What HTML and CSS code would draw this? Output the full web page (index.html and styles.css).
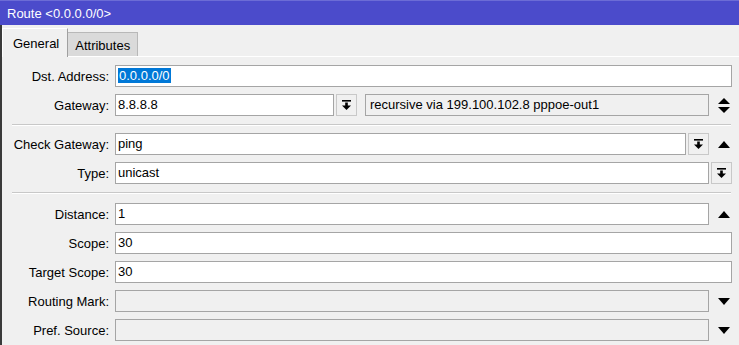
FILE: index.html
```html
<!DOCTYPE html>
<html>
<head>
<meta charset="utf-8">
<link rel="stylesheet" href="styles.css">
</head>
<body>
<div class="titlebar">Route &lt;0.0.0.0/0&gt;</div>
<div class="window">
  <div class="tabs">
    <div class="tab active">General</div>
    <div class="tab">Attributes</div>
  </div>
  <div class="form">
    <div class="group">
      <div class="row">
        <label class="lbl">Dst. Address:</label>
        <div class="field full"><span class="sel">0.0.0.0/0</span></div>
      </div>
      <div class="row">
        <label class="lbl">Gateway:</label>
        <div class="field gw">8.8.8.8</div>
        <div class="btn"><svg width="9" height="10" viewBox="0 0 9 10"><rect x="0" y="0" width="9" height="1.6" fill="#000"/><rect x="3.2" y="2.5" width="2.6" height="3.5" fill="#000"/><polygon points="0,5.5 9,5.5 4.5,10" fill="#000"/></svg></div>
        <div class="field ro rv">recursive via 199.100.102.8 pppoe-out1</div>
        <div class="icon"><svg width="12" height="15" viewBox="0 0 12 15"><polygon points="6,0 12,6 0,6" fill="#000"/><polygon points="0,9 12,9 6,15" fill="#000"/></svg></div>
      </div>
    </div>
    <div class="sep"></div>
    <div class="group">
      <div class="row">
        <label class="lbl">Check Gateway:</label>
        <div class="field grow">ping</div>
        <div class="btn"><svg width="9" height="10" viewBox="0 0 9 10"><rect x="0" y="0" width="9" height="1.6" fill="#000"/><rect x="3.2" y="2.5" width="2.6" height="3.5" fill="#000"/><polygon points="0,5.5 9,5.5 4.5,10" fill="#000"/></svg></div>
        <div class="icon"><svg width="12" height="7" viewBox="0 0 12 7"><polygon points="6,0 12,7 0,7" fill="#000"/></svg></div>
      </div>
      <div class="row">
        <label class="lbl">Type:</label>
        <div class="field grow">unicast</div>
        <div class="btn last"><svg width="9" height="10" viewBox="0 0 9 10"><rect x="0" y="0" width="9" height="1.6" fill="#000"/><rect x="3.2" y="2.5" width="2.6" height="3.5" fill="#000"/><polygon points="0,5.5 9,5.5 4.5,10" fill="#000"/></svg></div>
      </div>
    </div>
    <div class="sep sep2"></div>
    <div class="group">
      <div class="row">
        <label class="lbl">Distance:</label>
        <div class="field grow">1</div>
        <div class="icon"><svg width="12" height="7" viewBox="0 0 12 7"><polygon points="6,0 12,7 0,7" fill="#000"/></svg></div>
      </div>
      <div class="row">
        <label class="lbl">Scope:</label>
        <div class="field full">30</div>
      </div>
      <div class="row">
        <label class="lbl">Target Scope:</label>
        <div class="field full">30</div>
      </div>
      <div class="row">
        <label class="lbl">Routing Mark:</label>
        <div class="field grow ro"></div>
        <div class="icon"><svg width="12" height="7" viewBox="0 0 12 7"><polygon points="0,0 12,0 6,7" fill="#000"/></svg></div>
      </div>
      <div class="row">
        <label class="lbl">Pref. Source:</label>
        <div class="field grow ro"></div>
        <div class="icon"><svg width="12" height="7" viewBox="0 0 12 7"><polygon points="0,0 12,0 6,7" fill="#000"/></svg></div>
      </div>
    </div>
  </div>
</div>
</body>
</html>
```
FILE: styles.css
```css
html, body {
  margin: 0;
  padding: 0;
}
body {
  width: 739px;
  height: 345px;
  overflow: hidden;
  background: #f0f0f0;
  font-family: "Liberation Sans", Arial, sans-serif;
  font-size: 13px;
  color: #000;
}
.titlebar {
  height: 25px;
  line-height: 25px;
  background: #4b4bcb;
  border-top: 1px solid #6c6cd6;
  box-sizing: border-box;
  color: #fff;
  padding-left: 7px;
  font-size: 13px;
}
.window {
  border-left: 2px solid #3a3a3a;
  height: 320px;
  box-sizing: border-box;
}
.tabs {
  height: 32px;
  box-sizing: border-box;
  display: flex;
  align-items: flex-end;
  border-bottom: 1px solid #ffffff;
  padding-left: 0;
}
.tab {
  box-sizing: border-box;
  height: 24px;
  line-height: 25px;
  padding: 0 7px 0 7px;
  background: #dadada;
  border-top: 1px solid #b8b8b8;
  border-right: 1px solid #b8b8b8;
}
.tab.active {
  height: 29px;
  line-height: 30px;
  margin-bottom: -1px;
  background: #f0f0f0;
  border-top: 1px solid #ffffff;
  border-left: 1px solid #ffffff;
  border-right: 1px solid #a0a0a0;
  padding: 0 8px 0 10px;
}
.form {
  padding-top: 8px;
}
.group {
  display: flex;
  flex-direction: column;
  gap: 7px;
}
.row {
  display: flex;
  align-items: center;
  height: 22px;
}
.lbl {
  width: 107px;
  text-align: right;
  padding-right: 6px;
  flex: none;
  white-space: nowrap;
}
.field {
  box-sizing: border-box;
  height: 22px;
  line-height: 20px;
  border: 1px solid #a5a5a5;
  background: #fff;
  padding-left: 2px;
  white-space: nowrap;
  overflow: hidden;
}
.field.full {
  flex: 1;
  margin-right: 7px;
}
.field.grow {
  flex: 1;
}
.field.gw {
  width: 219px;
  flex: none;
}
.field.rv {
  flex: 1;
  margin-left: 8px;
  padding-left: 4px;
}
.field.ro {
  background: #f0f0f0;
}
.sel {
  background: #0078d7;
  color: #fff;
  padding: 0 1px;
}
.btn {
  box-sizing: border-box;
  width: 21px;
  height: 22px;
  margin-left: 2px;
  border: 1px solid #c8c8c8;
  background: #f0f0f0;
  display: flex;
  align-items: center;
  justify-content: center;
  flex: none;
}
.btn.last {
  margin-right: 7px;
}
.icon {
  width: 30px;
  flex: none;
  display: flex;
  align-items: center;
  justify-content: center;
}
.sep {
  height: 1px;
  background: #c8c8c8;
  border-bottom: 1px solid #ffffff;
  margin: 8px 8px 7px 10px;
}
.sep2 {
  margin-bottom: 9px;
}
```
